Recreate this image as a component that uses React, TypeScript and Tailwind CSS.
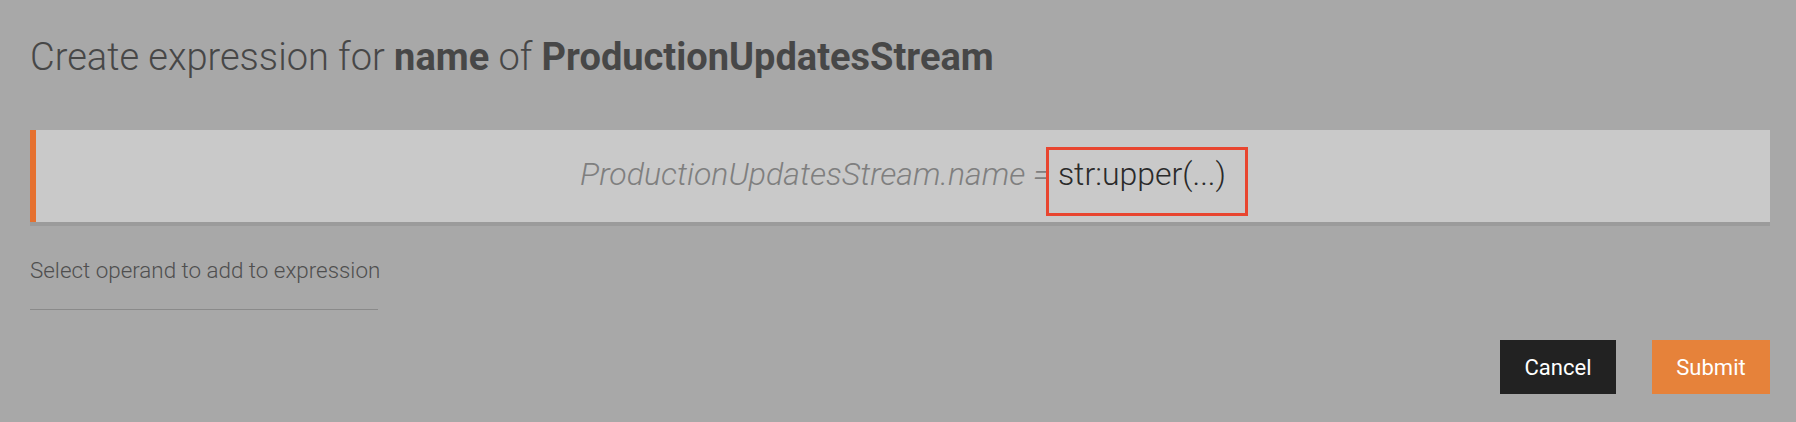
export default function App() {
  return (
    <div className="min-h-screen w-full bg-[#a8a8a8] pl-[30px] pr-[26px] pt-[38px] font-['Roboto',sans-serif]">
      {/* Title */}
      <h1 className="h-[38px] text-[38px] leading-[38px] font-light text-[#474747] whitespace-nowrap">
        Create expression for <span className="font-bold">name</span> of{' '}
        <span className="font-bold">ProductionUpdatesStream</span>
      </h1>

      {/* Expression preview */}
      <div className="mt-[54px] h-[92px] flex items-start justify-center bg-[#c9c9c9] border-l-[6px] border-[#e5702f] shadow-[0_4px_0_#9b9b9b]">
        <p className="pt-[28px] text-[32px] leading-none font-light whitespace-nowrap">
          <span className="italic text-[#7f7f7f]">ProductionUpdatesStream.name =</span>{' '}
          <span className="relative inline-block text-[#2a2a2a]">
            str:upper(...)
            <span className="absolute -left-[12px] -top-[11px] -right-[22px] -bottom-[26px] border-[3px] border-[#e8452f]" />
          </span>
        </p>
      </div>

      {/* Operand select */}
      <div className="mt-[37px] w-[348px] border-b border-[#8a8a8a] pb-[28px]">
        <p className="text-[22.4px] leading-[22px] font-light text-[#4f4f4f] whitespace-nowrap">
          Select operand to add to expression
        </p>
      </div>

      {/* Actions */}
      <div className="mt-[30px] flex justify-end gap-[36px]">
        <button className="w-[116px] h-[54px] bg-[#222222] text-white text-[22px]">Cancel</button>
        <button className="w-[118px] h-[54px] bg-[#e6823a] text-white text-[22px]">Submit</button>
      </div>
    </div>
  );
}
